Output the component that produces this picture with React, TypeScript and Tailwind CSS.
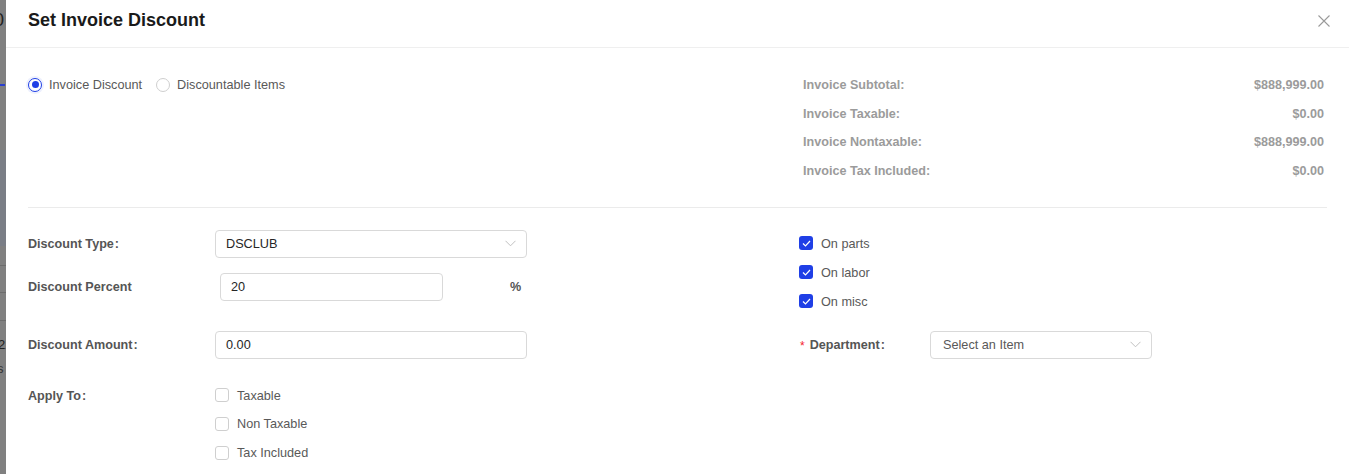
import React from "react";

const font = { fontFamily: '"Liberation Sans", Arial, sans-serif' };

function Chevron() {
  return (
    <svg width="11" height="7" viewBox="0 0 11 7" fill="none" className="shrink-0">
      <path d="M0.5 0.8 L5.5 5.8 L10.5 0.8" stroke="#c0c0c0" strokeWidth="1" />
    </svg>
  );
}

function CheckBox({ checked, label }: { checked?: boolean; label: string }) {
  return (
    <div className="flex items-center h-[29px]">
      {checked ? (
        <span className="w-[14px] h-[14px] rounded-[3px] bg-[#1f3fe6] flex items-center justify-center">
          <svg width="9" height="7" viewBox="0 0 9 7" fill="none">
            <path d="M1 3.5 L3.5 6 L8 1" stroke="#ffffff" strokeWidth="1.2" />
          </svg>
        </span>
      ) : (
        <span className="w-[14px] h-[14px] rounded-[3px] border border-[#cfcfcf] bg-white" />
      )}
      <span className="ml-[8px] text-[12.7px] text-[#595959] translate-y-[1px]">{label}</span>
    </div>
  );
}

function Label({ text, colon = true, required = false }: { text: string; colon?: boolean; required?: boolean }) {
  return (
    <span className="text-[12.6px] font-bold text-[#555555] flex items-center translate-y-[1px]">
      {required && <span className="text-[#f5222d] mr-[5px] font-normal text-[12px]">*</span>}
      {text}
      {colon && <span className="ml-[1px]">:</span>}
    </span>
  );
}

export default function App() {
  const summary = [
    ["Invoice Subtotal:", "$888,999.00"],
    ["Invoice Taxable:", "$0.00"],
    ["Invoice Nontaxable:", "$888,999.00"],
    ["Invoice Tax Included:", "$0.00"],
  ];
  return (
    <div className="w-[1349px] h-[474px] flex overflow-hidden bg-white" style={font}>
      {/* dimmed background strip */}
      <div className="w-[6px] shrink-0 bg-[#808080] flex flex-col overflow-hidden">
        <div className="h-[40px] text-[18px] leading-[40px] text-[#222] -ml-[6px]">0</div>
        <div className="h-[44px]" />
        <div className="h-[2px] w-[5px] bg-[#2a3fd0]" />
        <div className="h-[64px]" />
        <div className="h-[96px] bg-[#7a7e86]" />
        <div className="h-[20px] border-b border-[#6d6d6d]" />
        <div className="h-[27px] border-b border-[#6d6d6d]" />
        <div className="h-[28px] border-b border-[#6d6d6d]" />
        <div className="h-[28px] border-b border-[#6d6d6d] text-[13px] leading-[48px] text-[#222] -ml-[2px]">2</div>
        <div className="h-[40px] text-[13px] leading-[40px] text-[#333] -ml-[3px]">s</div>
      </div>

      {/* drawer */}
      <div className="flex-1 flex flex-col bg-white">
        <div className="h-[48px] border-b border-[#efefef] flex items-start justify-between pl-[22px] pr-[19px] pt-[10px]">
          <span className="text-[18px] font-bold text-[#1a1a1a] leading-[21px]">Set Invoice Discount</span>
          <svg width="12" height="12" viewBox="0 0 12 12" className="mt-[5px]">
            <path d="M0.5 0.5 L11.5 11.5 M11.5 0.5 L0.5 11.5" stroke="#9a9a9a" strokeWidth="1.1" />
          </svg>
        </div>

        <div className="px-[22px]">
          {/* top section */}
          <div className="flex pt-[22px] pb-[22px] border-b border-[#ebebeb]">
            <div className="w-[775px] flex items-start">
              <div className="flex items-center h-[29px]">
                <span className="w-[14px] h-[14px] rounded-full border border-[#1f3fe6] bg-white flex items-center justify-center shadow-[0_0_0_2px_rgba(31,63,230,0.08)]">
                  <span className="w-[7px] h-[7px] rounded-full bg-[#1f3fe6]" />
                </span>
                <span className="ml-[7px] text-[12.7px] text-[#595959] translate-y-[1px]">Invoice Discount</span>
              </div>
              <div className="flex items-center h-[29px] ml-[14px]">
                <span className="w-[14px] h-[14px] rounded-full border border-[#cfcfcf] bg-white" />
                <span className="ml-[7px] text-[12.7px] text-[#595959] translate-y-[1px]">Discountable Items</span>
              </div>
            </div>
            <div className="flex-1 flex flex-col pr-[3px]">
              {summary.map(([k, v]) => (
                <div key={k} className="h-[28.7px] flex items-center justify-between text-[12.6px] font-bold text-[#9b9b9b]">
                  <span className="translate-y-[1px]">{k}</span>
                  <span className="translate-y-[1px]">{v}</span>
                </div>
              ))}
            </div>
          </div>

          {/* form section */}
          <div className="flex pt-[22px]">
            <div className="w-[771px] flex flex-col">
              <div className="flex items-center h-[28px]">
                <div className="w-[187px]"><Label text="Discount Type" /></div>
                <div className="w-[312px] h-[28px] border border-[#d9d9d9] rounded-[4px] flex items-center justify-between pl-[10px] pr-[10px]">
                  <span className="text-[12.7px] text-[#262626] translate-y-[1px]">DSCLUB</span>
                  <Chevron />
                </div>
              </div>
              <div className="flex items-center h-[28px] mt-[15px]">
                <div className="w-[187px]"><Label text="Discount Percent" colon={false} /></div>
                <div className="ml-[5px] w-[223px] h-[28px] border border-[#d9d9d9] rounded-[4px] flex items-center pl-[10px]">
                  <span className="text-[12.7px] text-[#262626] translate-y-[1px]">20</span>
                </div>
                <span className="ml-[67px] text-[12.6px] font-bold text-[#555555] translate-y-[1px]">%</span>
              </div>
              <div className="flex items-center h-[28px] mt-[30px]">
                <div className="w-[187px]"><Label text="Discount Amount" /></div>
                <div className="w-[312px] h-[28px] border border-[#d9d9d9] rounded-[4px] flex items-center pl-[10px]">
                  <span className="text-[12.7px] text-[#262626] translate-y-[1px]">0.00</span>
                </div>
              </div>
              <div className="flex items-start mt-[22px]">
                <div className="w-[187px] h-[29px] flex items-center"><Label text="Apply To" /></div>
                <div className="flex flex-col">
                  <CheckBox label="Taxable" />
                  <div className="-mt-[0.5px]"><CheckBox label="Non Taxable" /></div>
                  <CheckBox label="Tax Included" />
                </div>
              </div>
            </div>
            <div className="flex-1 flex flex-col -mt-[1px]">
              <CheckBox checked label="On parts" />
              <CheckBox checked label="On labor" />
              <CheckBox checked label="On misc" />
              <div className="flex items-center h-[28px] mt-[15px]">
                <div className="w-[131px] pl-[1px]"><Label text="Department" required /></div>
                <div className="w-[222px] h-[28px] border border-[#d9d9d9] rounded-[4px] flex items-center justify-between pl-[12px] pr-[10px]">
                  <span className="text-[12.7px] text-[#595959] translate-y-[1px]">Select an Item</span>
                  <Chevron />
                </div>
              </div>
            </div>
          </div>
        </div>
      </div>
    </div>
  );
}
